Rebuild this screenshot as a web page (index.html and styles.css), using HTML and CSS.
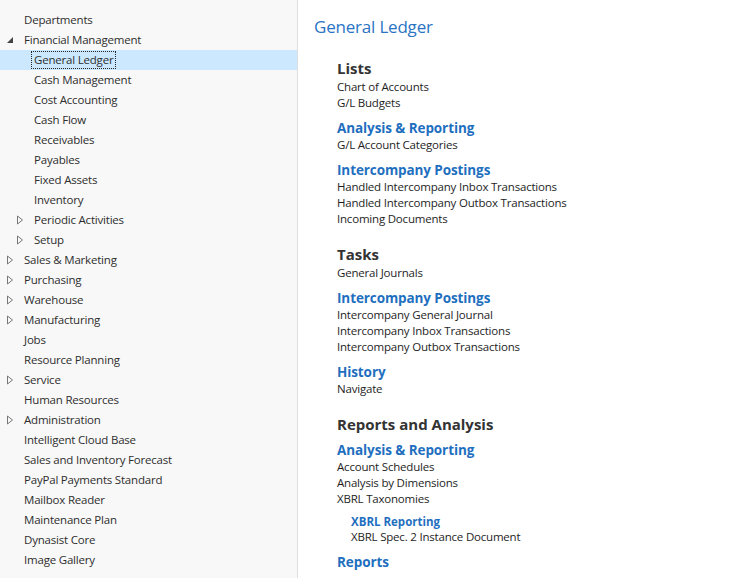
FILE: index.html
```html
<!DOCTYPE html>
<html>
<head>
<meta charset="utf-8">
<link rel="stylesheet" href="styles.css">
</head>
<body>
<div class="app">
  <nav class="side">
    <div class="row l0">Departments</div>
    <div class="row l0"><svg class="arw" width="8" height="8" viewBox="0 0 8 8"><path d="M7 1 L7 7 L1 7 Z" fill="#444"/></svg>Financial Management</div>
    <div class="row l1 sel"><span class="focus">General Ledger</span></div>
    <div class="row l1">Cash Management</div>
    <div class="row l1">Cost Accounting</div>
    <div class="row l1">Cash Flow</div>
    <div class="row l1">Receivables</div>
    <div class="row l1">Payables</div>
    <div class="row l1">Fixed Assets</div>
    <div class="row l1">Inventory</div>
    <div class="row l1"><svg class="arw c" width="8" height="10" viewBox="0 0 8 10"><path d="M1.5 1 L6.5 5 L1.5 9 Z" fill="none" stroke="#777"/></svg>Periodic Activities</div>
    <div class="row l1"><svg class="arw c" width="8" height="10" viewBox="0 0 8 10"><path d="M1.5 1 L6.5 5 L1.5 9 Z" fill="none" stroke="#777"/></svg>Setup</div>
    <div class="row l0"><svg class="arw c" width="8" height="10" viewBox="0 0 8 10"><path d="M1.5 1 L6.5 5 L1.5 9 Z" fill="none" stroke="#777"/></svg>Sales &amp; Marketing</div>
    <div class="row l0"><svg class="arw c" width="8" height="10" viewBox="0 0 8 10"><path d="M1.5 1 L6.5 5 L1.5 9 Z" fill="none" stroke="#777"/></svg>Purchasing</div>
    <div class="row l0"><svg class="arw c" width="8" height="10" viewBox="0 0 8 10"><path d="M1.5 1 L6.5 5 L1.5 9 Z" fill="none" stroke="#777"/></svg>Warehouse</div>
    <div class="row l0"><svg class="arw c" width="8" height="10" viewBox="0 0 8 10"><path d="M1.5 1 L6.5 5 L1.5 9 Z" fill="none" stroke="#777"/></svg>Manufacturing</div>
    <div class="row l0">Jobs</div>
    <div class="row l0">Resource Planning</div>
    <div class="row l0"><svg class="arw c" width="8" height="10" viewBox="0 0 8 10"><path d="M1.5 1 L6.5 5 L1.5 9 Z" fill="none" stroke="#777"/></svg>Service</div>
    <div class="row l0">Human Resources</div>
    <div class="row l0"><svg class="arw c" width="8" height="10" viewBox="0 0 8 10"><path d="M1.5 1 L6.5 5 L1.5 9 Z" fill="none" stroke="#777"/></svg>Administration</div>
    <div class="row l0">Intelligent Cloud Base</div>
    <div class="row l0">Sales and Inventory Forecast</div>
    <div class="row l0">PayPal Payments Standard</div>
    <div class="row l0">Mailbox Reader</div>
    <div class="row l0">Maintenance Plan</div>
    <div class="row l0">Dynasist Core</div>
    <div class="row l0">Image Gallery</div>
  </nav>
  <main class="main">
    <h1 class="title">General Ledger</h1>
    <div class="content">
      <h2 class="grp first">Lists</h2>
      <div class="item">Chart of Accounts</div>
      <div class="item">G/L Budgets</div>
      <h3 class="sub">Analysis &amp; Reporting</h3>
      <div class="item">G/L Account Categories</div>
      <h3 class="sub">Intercompany Postings</h3>
      <div class="item">Handled Intercompany Inbox Transactions</div>
      <div class="item">Handled Intercompany Outbox Transactions</div>
      <div class="item">Incoming Documents</div>

      <h2 class="grp">Tasks</h2>
      <div class="item">General Journals</div>
      <h3 class="sub">Intercompany Postings</h3>
      <div class="item">Intercompany General Journal</div>
      <div class="item">Intercompany Inbox Transactions</div>
      <div class="item">Intercompany Outbox Transactions</div>
      <h3 class="sub">History</h3>
      <div class="item">Navigate</div>

      <h2 class="grp">Reports and Analysis</h2>
      <h3 class="sub">Analysis &amp; Reporting</h3>
      <div class="item">Account Schedules</div>
      <div class="item">Analysis by Dimensions</div>
      <div class="item">XBRL Taxonomies</div>
      <div class="nested">
        <h4 class="subsub">XBRL Reporting</h4>
        <div class="item">XBRL Spec. 2 Instance Document</div>
      </div>
      <h3 class="sub">Reports</h3>
    </div>
  </main>
</div>
</body>
</html>
```
FILE: styles.css
```css
html, body {
  margin: 0;
  padding: 0;
  background: #ffffff;
  font-family: "Open Sans", "Noto Sans", sans-serif;
  overflow: hidden;
}
.app {
  display: flex;
  height: 578px;
}
.side {
  width: 297px;
  flex: none;
  background: #f8f8f8;
  border-right: 1px solid #dedede;
  padding-top: 10px;
  box-sizing: content-box;
  font-size: 11.5px;
  letter-spacing: -0.2px;
  color: #2e2e2e;
}
.row {
  position: relative;
  height: 20px;
  line-height: 20px;
  white-space: nowrap;
}
.row.l0 { padding-left: 24px; }
.row.l1 { padding-left: 34px; }
.row .arw {
  position: absolute;
  top: 5px;
}
.row.l0 .arw { left: 6px; top: 6px; }
.row.l1 .arw { left: 16px; }
.row.l0 .arw.c { left: 6px; top: 5px; }
.row.sel {
  background: #cce8ff;
  padding-left: 31px;
}
.focus {
  display: inline-block;
  border: 1px dotted #222;
  line-height: 16px;
  padding: 0 2px;
  vertical-align: top;
  margin-top: 1px;
}
.main {
  flex: 1;
  padding-left: 16px;
}
.title {
  margin: 15px 0 0 0;
  font-size: 17px;
  letter-spacing: -0.2px;
  line-height: 24px;
  font-weight: normal;
  color: #2b74c4;
}
.content {
  margin-left: 23px;
  font-size: 11.5px;
  letter-spacing: -0.2px;
  color: #1e1e1e;
}
.grp {
  margin: 18px 0 2px 0;
  font-size: 15px;
  letter-spacing: 0;
  line-height: 18px;
  font-weight: bold;
  color: #333;
}
.grp.first { margin-top: 20px; }
.sub {
  margin: 8px 0 0 0;
  font-size: 13.5px;
  letter-spacing: -0.1px;
  line-height: 18px;
  font-weight: bold;
  color: #1f6fbf;
}
.item {
  line-height: 16px;
  height: 16px;
  white-space: nowrap;
}
.nested {
  margin-left: 14px;
}
.subsub {
  margin: 7px 0 0 0;
  font-size: 11.5px;
  letter-spacing: 0;
  line-height: 15px;
  font-weight: bold;
  color: #1f6fbf;
}
```
